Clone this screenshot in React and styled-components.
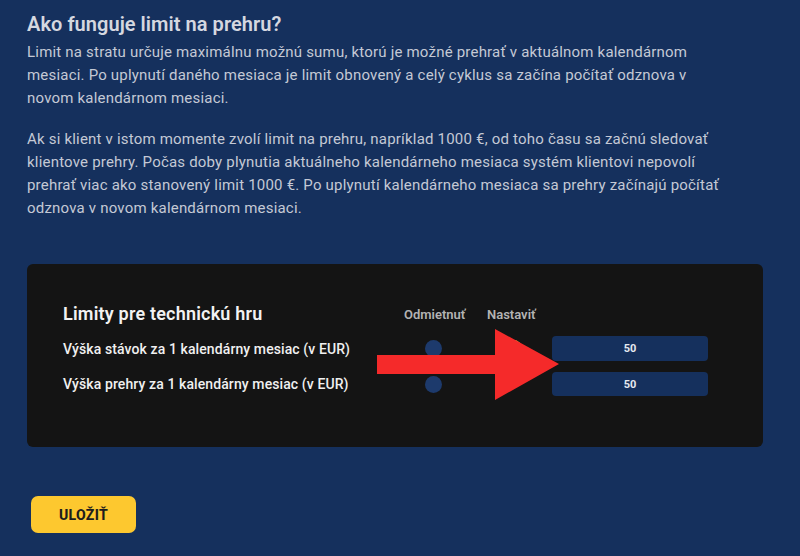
import React from "react";
import styled, { createGlobalStyle } from "styled-components";

const Global = createGlobalStyle`
  html, body { margin: 0; padding: 0; background: #15305d; }
  body { font-family: Roboto, "Liberation Sans", sans-serif; }
`;

const Page = styled.div`
  width: 800px;
  height: 556px;
  box-sizing: border-box;
  padding: 12px 37px 0 27px;
  background: #15305d;
  display: flex;
  flex-direction: column;
  overflow: hidden;
`;

const Heading = styled.h2`
  margin: 0 0 5px;
  font-size: 20px;
  line-height: 24px;
  font-weight: 600;
  color: #d5d8e0;
  letter-spacing: 0.05px;
`;

const Para = styled.p`
  margin: 0 0 18px;
  font-size: 15px;
  line-height: 23px;
  color: #c4c9d5;
  letter-spacing: 0.2px;
  white-space: nowrap;
`;

const Card = styled.section`
  position: relative;
  margin-top: 26px;
  height: 183px;
  box-sizing: border-box;
  background: #141414;
  border-radius: 6px;
  padding: 37px 55px 0 36px;
`;

const Grid = styled.div`
  display: grid;
  grid-template-columns: 341px 83px 65px 156px;
  grid-template-rows: 24px 25px 24px;
  row-gap: 11px;
  align-items: center;
`;

const CardTitle = styled.div`
  font-size: 18px;
  font-weight: 600;
  color: #f2f2f2;
  letter-spacing: 0.2px;
`;

const ColHead = styled.div`
  font-size: 13px;
  font-weight: 600;
  color: #b3b3b3;
  padding-top: 2px;
`;

const Label = styled.div`
  font-size: 14px;
  font-weight: 500;
  color: #f0f0f0;
  letter-spacing: 0.1px;
`;

const RadioCell = styled.div`
  width: ${(p) => p.$w}px;
  display: flex;
  justify-content: center;
`;

const Dot = styled.span`
  width: 17px;
  height: 17px;
  border-radius: 50%;
  background: ${(p) => (p.$on ? "#fdc82f" : "#1d3a6c")};
  visibility: ${(p) => (p.$hidden ? "hidden" : "visible")};
`;

const ValueBox = styled.div`
  height: 100%;
  background: #15305d;
  border-radius: 4px;
  display: flex;
  align-items: center;
  justify-content: center;
  font-size: 11px;
  font-weight: 700;
  color: #e6e9f0;
`;

const Arrow = styled.svg`
  position: absolute;
  left: 350px;
  top: 65px;
`;

const SaveButton = styled.button`
  align-self: flex-start;
  margin: 49px 0 0 4px;
  width: 105px;
  height: 37px;
  border: none;
  border-radius: 7px;
  background: #fdc82f;
  color: #1d1d1d;
  font-family: Roboto, "Liberation Sans", sans-serif;
  font-size: 14px;
  font-weight: 800;
  letter-spacing: 0.3px;
`;

const rows = [
  { label: "Výška stávok za 1 kalendárny mesiac (v EUR)", set: true },
  { label: "Výška prehry za 1 kalendárny mesiac (v EUR)", set: false },
];

export default function App() {
  return (
    <>
      <Global />
      <Page>
        <Heading>Ako funguje limit na prehru?</Heading>
        <Para>
          Limit na stratu určuje maximálnu možnú sumu, ktorú je možné prehrať v aktuálnom kalendárnom
          <br />
          mesiaci. Po uplynutí daného mesiaca je limit obnovený a celý cyklus sa začína počítať odznova v
          <br />
          novom kalendárnom mesiaci.
        </Para>
        <Para>
          Ak si klient v istom momente zvolí limit na prehru, napríklad 1000 €, od toho času sa začnú sledovať
          <br />
          klientove prehry. Počas doby plynutia aktuálneho kalendárneho mesiaca systém klientovi nepovolí
          <br />
          prehrať viac ako stanovený limit 1000 €. Po uplynutí kalendárneho mesiaca sa prehry začínajú počítať
          <br />
          odznova v novom kalendárnom mesiaci.
        </Para>
        <Card>
          <Grid>
            <CardTitle>Limity pre technickú hru</CardTitle>
            <ColHead>Odmietnuť</ColHead>
            <ColHead>Nastaviť</ColHead>
            <div />
            {rows.map((r) => (
              <React.Fragment key={r.label}>
                <Label>{r.label}</Label>
                <RadioCell $w={59}>
                  <Dot />
                </RadioCell>
                <RadioCell $w={52}>
                  <Dot $on $hidden={!r.set} />
                </RadioCell>
                <ValueBox>50</ValueBox>
              </React.Fragment>
            ))}
          </Grid>
          <Arrow width="183" height="72" viewBox="0 0 183 72">
            <polygon
              points="0,26 118,26 118,0 182,35 118,71 118,45 0,45"
              fill="#f52a2a"
            />
          </Arrow>
        </Card>
        <SaveButton>ULOŽIŤ</SaveButton>
      </Page>
    </>
  );
}
